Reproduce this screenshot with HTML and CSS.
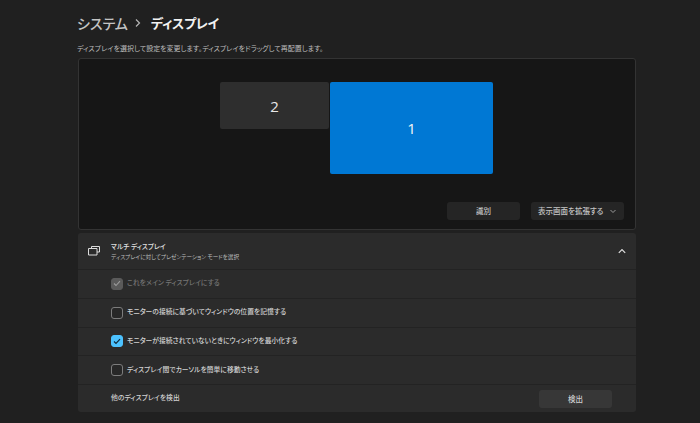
FILE: index.html
```html
<!DOCTYPE html>
<html lang="ja">
<head>
<meta charset="utf-8">
<title>ディスプレイ</title>
<link rel="stylesheet" href="styles.css">
</head>
<body>
<main class="page">
  <h1 class="title"><span class="crumb">システム</span><svg class="sep" width="8" height="10" viewBox="0 0 8 10"><path d="M2 1.500 5.500 5 2 8.500" fill="none" stroke="#b5b5b5" stroke-width="1.200"/></svg><span class="current">ディスプレイ</span></h1>
  <p class="lead">ディスプレイを選択して設定を変更します。ディスプレイをドラッグして再配置します。</p>
  <section class="canvas">
    <div class="monitor m2">2</div>
    <div class="monitor m1">1</div>
    <div class="actions">
      <button class="btn identify">識別</button>
      <button class="btn extend">表示画面を拡張する<svg width="6" height="5" viewBox="0 0 6 5"><path d="M.500 1 3 3.500 5.500 1" fill="none" stroke="#9a9a9a" stroke-width="1"/></svg></button>
    </div>
  </section>
  <section class="card">
    <div class="head">
      <svg class="head-icon" width="12" height="10" viewBox="0 0 12 10"><path d="M3.500 2.500V.500h8v5.500H9M.500 2.500h8.500v6.500H.500z" fill="none" stroke="#dcdcdc" stroke-width="1"/></svg>
      <div class="head-text">
        <div class="head-title">マルチ ディスプレイ</div>
        <div class="head-sub">ディスプレイに対してプレゼンテーション モードを選択</div>
      </div>
      <svg class="caret" width="8" height="6" viewBox="0 0 8 6"><path d="M.800 4.800 4 1.500 7.200 4.800" fill="none" stroke="#dedede" stroke-width="1.200"/></svg>
    </div>
    <div class="row disabled"><span class="box on-muted"><svg width="8" height="7" viewBox="0 0 8 7"><path d="M1 3.500 3 5.500 7 1.200" fill="none" stroke="#9b9b9b" stroke-width="1.100"/></svg></span>これをメイン ディスプレイにする</div>
    <div class="row"><span class="box"></span>モニターの接続に基づいてウィンドウの位置を記憶する</div>
    <div class="row"><span class="box on"><svg width="8" height="7" viewBox="0 0 8 7"><path d="M1 3.500 3 5.500 7 1.200" fill="none" stroke="#10283a" stroke-width="1.200"/></svg></span>モニターが接続されていないときにウィンドウを最小化する</div>
    <div class="row"><span class="box"></span>ディスプレイ間でカーソルを簡単に移動させる</div>
    <div class="row detect"><span>他のディスプレイを検出</span><button class="btn detect-btn">検出</button></div>
  </section>
</main>
</body>
</html>
```
FILE: styles.css
```css
* { box-sizing: border-box; }
html, body { margin: 0; height: 100%; }
body {
  background: #202020;
  color: #d8d8d8;
  font-family: "Noto Sans CJK JP", "Noto Sans", sans-serif;
  font-feature-settings: "palt";
  overflow: hidden;
}
.page { width: 700px; height: 423px; padding: 12px 64px 0 78px; }
.title {
  margin: 0 0 0 -1px;
  height: 22px;
  display: flex;
  align-items: center;
  font-size: 14px;
  line-height: 22px;
  font-weight: 500;
}
.crumb { color: #c4c4c4; }
.sep { margin: 0 9px 0 6px; }
.current { color: #f2f2f2; font-weight: 700; font-size: 13px; letter-spacing: -.3px; }
.lead {
  margin: 8px 0 0 -1px;
  height: 16px;
  font-size: 7px;
  line-height: 12px;
  color: #bdbdbd;
}
.canvas {
  position: relative;
  height: 172px;
  background: #161616;
  border: 1px solid #333;
  border-radius: 3px;
}
.monitor {
  position: absolute;
  display: flex;
  align-items: center;
  justify-content: center;
  font-family: "Open Sans", "Noto Sans", sans-serif;
  font-size: 15px;
  color: #e8e8e8;
  border-radius: 2px;
}
.m2 { left: 141px; top: 23px; width: 109px; height: 47px; background: #2e2e2e; }
.m1 { left: 251px; top: 23px; width: 163px; height: 92px; background: #0078d4; color: #f5f5f5; }
.actions {
  position: absolute;
  right: 11px;
  bottom: 9px;
  display: flex;
  gap: 11px;
}
.btn {
  height: 18px;
  padding: 0;
  border: 0;
  border-radius: 3px;
  background: #252525;
  color: #c6c6c6;
  font: 500 7.500px/18px "Noto Sans CJK JP", sans-serif;
  font-feature-settings: "palt";
}
.identify { width: 73px; }
.extend {
  width: 93px;
  display: flex;
  align-items: center;
  justify-content: space-between;
  padding: 0 8px 0 7px;
}
.card {
  margin-top: 3px;
  height: 179px;
  background: #2b2b2b;
  border-radius: 3px;
  overflow: hidden;
}
.head {
  height: 36px;
  display: flex;
  align-items: center;
  padding: 0 10px 0 10px;
}
.head-icon { flex: none; }
.head-text { flex: 1; margin-left: 11px; }
.head-title { font-size: 6.700px; line-height: 11px; font-weight: 500; color: #e0e0e0; }
.head-sub { font-size: 5.600px; line-height: 10px; color: #bcbcbc; }
.caret { flex: none; }
.row {
  height: 28.750px;
  display: flex;
  align-items: center;
  padding: 0 24px 3px 33px;
  border-top: 1px solid #232323;
  font-size: 6.800px;
  font-weight: 500;
  color: #d2d2d2;
}
.disabled { color: #747474; }
.box {
  flex: none;
  width: 12px;
  height: 12px;
  margin: 3px 4px 0 0;
  display: flex;
  align-items: center;
  justify-content: center;
  border: 1px solid #7c7c7c;
  border-radius: 3px;
  background: #272727;
}
.on { background: #4cc2ff; border-color: #4cc2ff; }
.on-muted { background: #5a5a5a; border-color: #5a5a5a; }
.detect { justify-content: space-between; height: 28px; padding-bottom: 0; }
.detect span { margin-top: -3px; }
.detect-btn { width: 73px; height: 18px; background: #373737; color: #d0d0d0; }
```
